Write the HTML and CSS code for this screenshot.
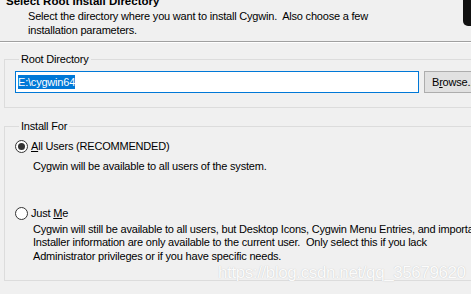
FILE: index.html
```html
<!DOCTYPE html>
<html lang="en">
<head>
    <meta charset="UTF-8">
    <title>Cygwin Setup - Select Root Install Directory</title>
    <link rel="stylesheet" href="styles.css">
</head>
<body>
    <div class="page">
        <div class="header">
            <div class="title">Select Root Install Directory</div>
            <div class="subtitle">Select the directory where you want to install Cygwin.&nbsp; Also choose a few<br>installation parameters.</div>
            <div class="logo"></div>
        </div>

        <div class="content">
            <fieldset class="group root">
                <legend>Root Directory</legend>
                <div class="path-row">
                    <div class="path-input"><span class="selected">E:\cygwin64</span></div>
                    <button class="browse">B<u>r</u>owse...</button>
                </div>
            </fieldset>

            <fieldset class="group install">
                <legend>Install For</legend>
                <div class="option">
                    <span class="radio checked"></span>
                    <span class="option-label"><u>A</u>ll Users (RECOMMENDED)</span>
                </div>
                <p class="option-desc">Cygwin will be available to all users of the system.</p>

                <div class="option second">
                    <span class="radio"></span>
                    <span class="option-label">Just <u>M</u>e</span>
                </div>
                <p class="option-desc multi">Cygwin will still be available to all users, but Desktop Icons, Cygwin Menu Entries, and important<br>Installer information are only available to the current user.&nbsp; Only select this if you lack<br>Administrator privileges or if you have specific needs.</p>
            </fieldset>
        </div>

        <div class="watermark">https://blog.csdn.net/qq_35679620</div>
    </div>
</body>
</html>
```

FILE: styles.css
```css
body {
    margin: 0;
    background-color: #f0f0f0;
    overflow: hidden;
    font-family: "Liberation Sans", Arial, sans-serif;
    font-size: 11px;
    letter-spacing: -0.2px;
    color: #000;
}
.page {
    position: relative;
    width: 560px;
    height: 294px;
}
.header {
    position: relative;
    display: flow-root;
    height: 41px;
    border-bottom: 1px solid #a0a0a0;
    box-shadow: 0 1px 0 #fff;
}
.title {
    margin-top: -6px;
    padding-left: 6px;
    line-height: 14px;
    font-size: 11.5px;
    font-weight: bold;
    letter-spacing: 0;
}
.subtitle {
    margin-top: 1px;
    padding-left: 28px;
    line-height: 14px;
}
.logo {
    position: absolute;
    top: 0;
    left: 463px;
    width: 40px;
    height: 26px;
    background-color: #111;
    border-bottom-left-radius: 5px;
}
.content {
    padding-top: 11px;
}
.group {
    margin: 0 0 0 4px;
    width: 520px;
    border: 1px solid #dcdcdc;
    padding: 6px 0 14px 10px;
}
.group legend {
    padding: 0 2px;
    margin-left: 4px;
    line-height: 12px;
}
.path-row {
    display: flex;
    gap: 5px;
}
.path-input {
    width: 400px;
    height: 20px;
    border: 1px solid #0078d7;
    background-color: #fff;
    display: flex;
    align-items: center;
    padding-left: 2px;
}
.selected {
    background-color: #0078d7;
    color: #fff;
    line-height: 14px;
}
.browse {
    width: 75px;
    height: 22px;
    padding: 0 0 0 7px;
    text-align: left;
    border: 1px solid #adadad;
    background-color: #e1e1e1;
    font-family: inherit;
    font-size: 11px;
    letter-spacing: inherit;
    color: #000;
}
.install {
    margin-top: 12px;
    padding-top: 8px;
    padding-bottom: 17px;
}
.option {
    display: flex;
    align-items: center;
    gap: 3px;
    line-height: 13px;
}
.option.second {
    margin-top: 34px;
}
.radio {
    box-sizing: border-box;
    width: 13px;
    height: 13px;
    border: 1px solid #333;
    border-radius: 50%;
    background-color: #fff;
    display: flex;
    align-items: center;
    justify-content: center;
}
.radio.checked::after {
    content: "";
    width: 7px;
    height: 7px;
    border-radius: 50%;
    background-color: #333;
}
.option-desc {
    margin: 7px 0 0 0;
    padding-left: 18px;
    line-height: 13px;
    white-space: nowrap;
}
.option-desc.multi {
    margin-top: 3px;
    line-height: 13.4px;
}
.watermark {
    position: absolute;
    left: 218px;
    top: 263px;
    font-size: 17px;
    letter-spacing: -0.4px;
    color: #fbfbfb;
    text-shadow: 0 0 1px #bdbdbd;
    white-space: nowrap;
}
```
